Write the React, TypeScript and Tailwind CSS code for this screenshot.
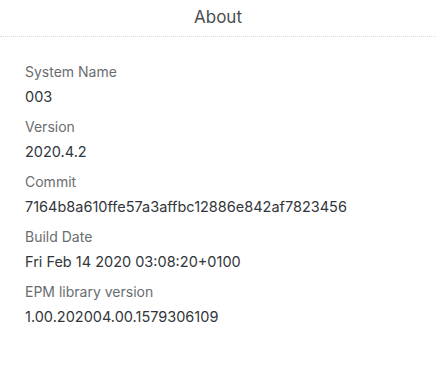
import React from "react";

const rows = [
    { label: "System Name", value: "003" },
    { label: "Version", value: "2020.4.2" },
    { label: "Commit", value: "7164b8a610ffe57a3affbc12886e842af7823456" },
    { label: "Build Date", value: "Fri Feb 14 2020 03:08:20+0100" },
    { label: "EPM library version", value: "1.00.202004.00.1579306109" },
];

export default function App() {
    return (
        <div className="w-[436px] h-[372px] bg-white font-['Inter',sans-serif] overflow-hidden">
            <header className="h-[37px] flex items-center justify-center border-b border-dotted border-[#d9d9d9]">
                <h1 className="text-[17px] leading-[24px] text-[#4a4d50] pb-[2px]">About</h1>
            </header>

            <div className="pt-[25px] px-[25px] flex flex-col gap-[10px]">
                {rows.map((row) => (
                    <div key={row.label} className="flex flex-col gap-[5px]">
                        <span className="text-[14px] leading-[20px] text-[#6a6d70]">{row.label}</span>
                        <span className="text-[14.5px] leading-[20px] text-[#32363a]">{row.value}</span>
                    </div>
                ))}
            </div>
        </div>
    );
}
